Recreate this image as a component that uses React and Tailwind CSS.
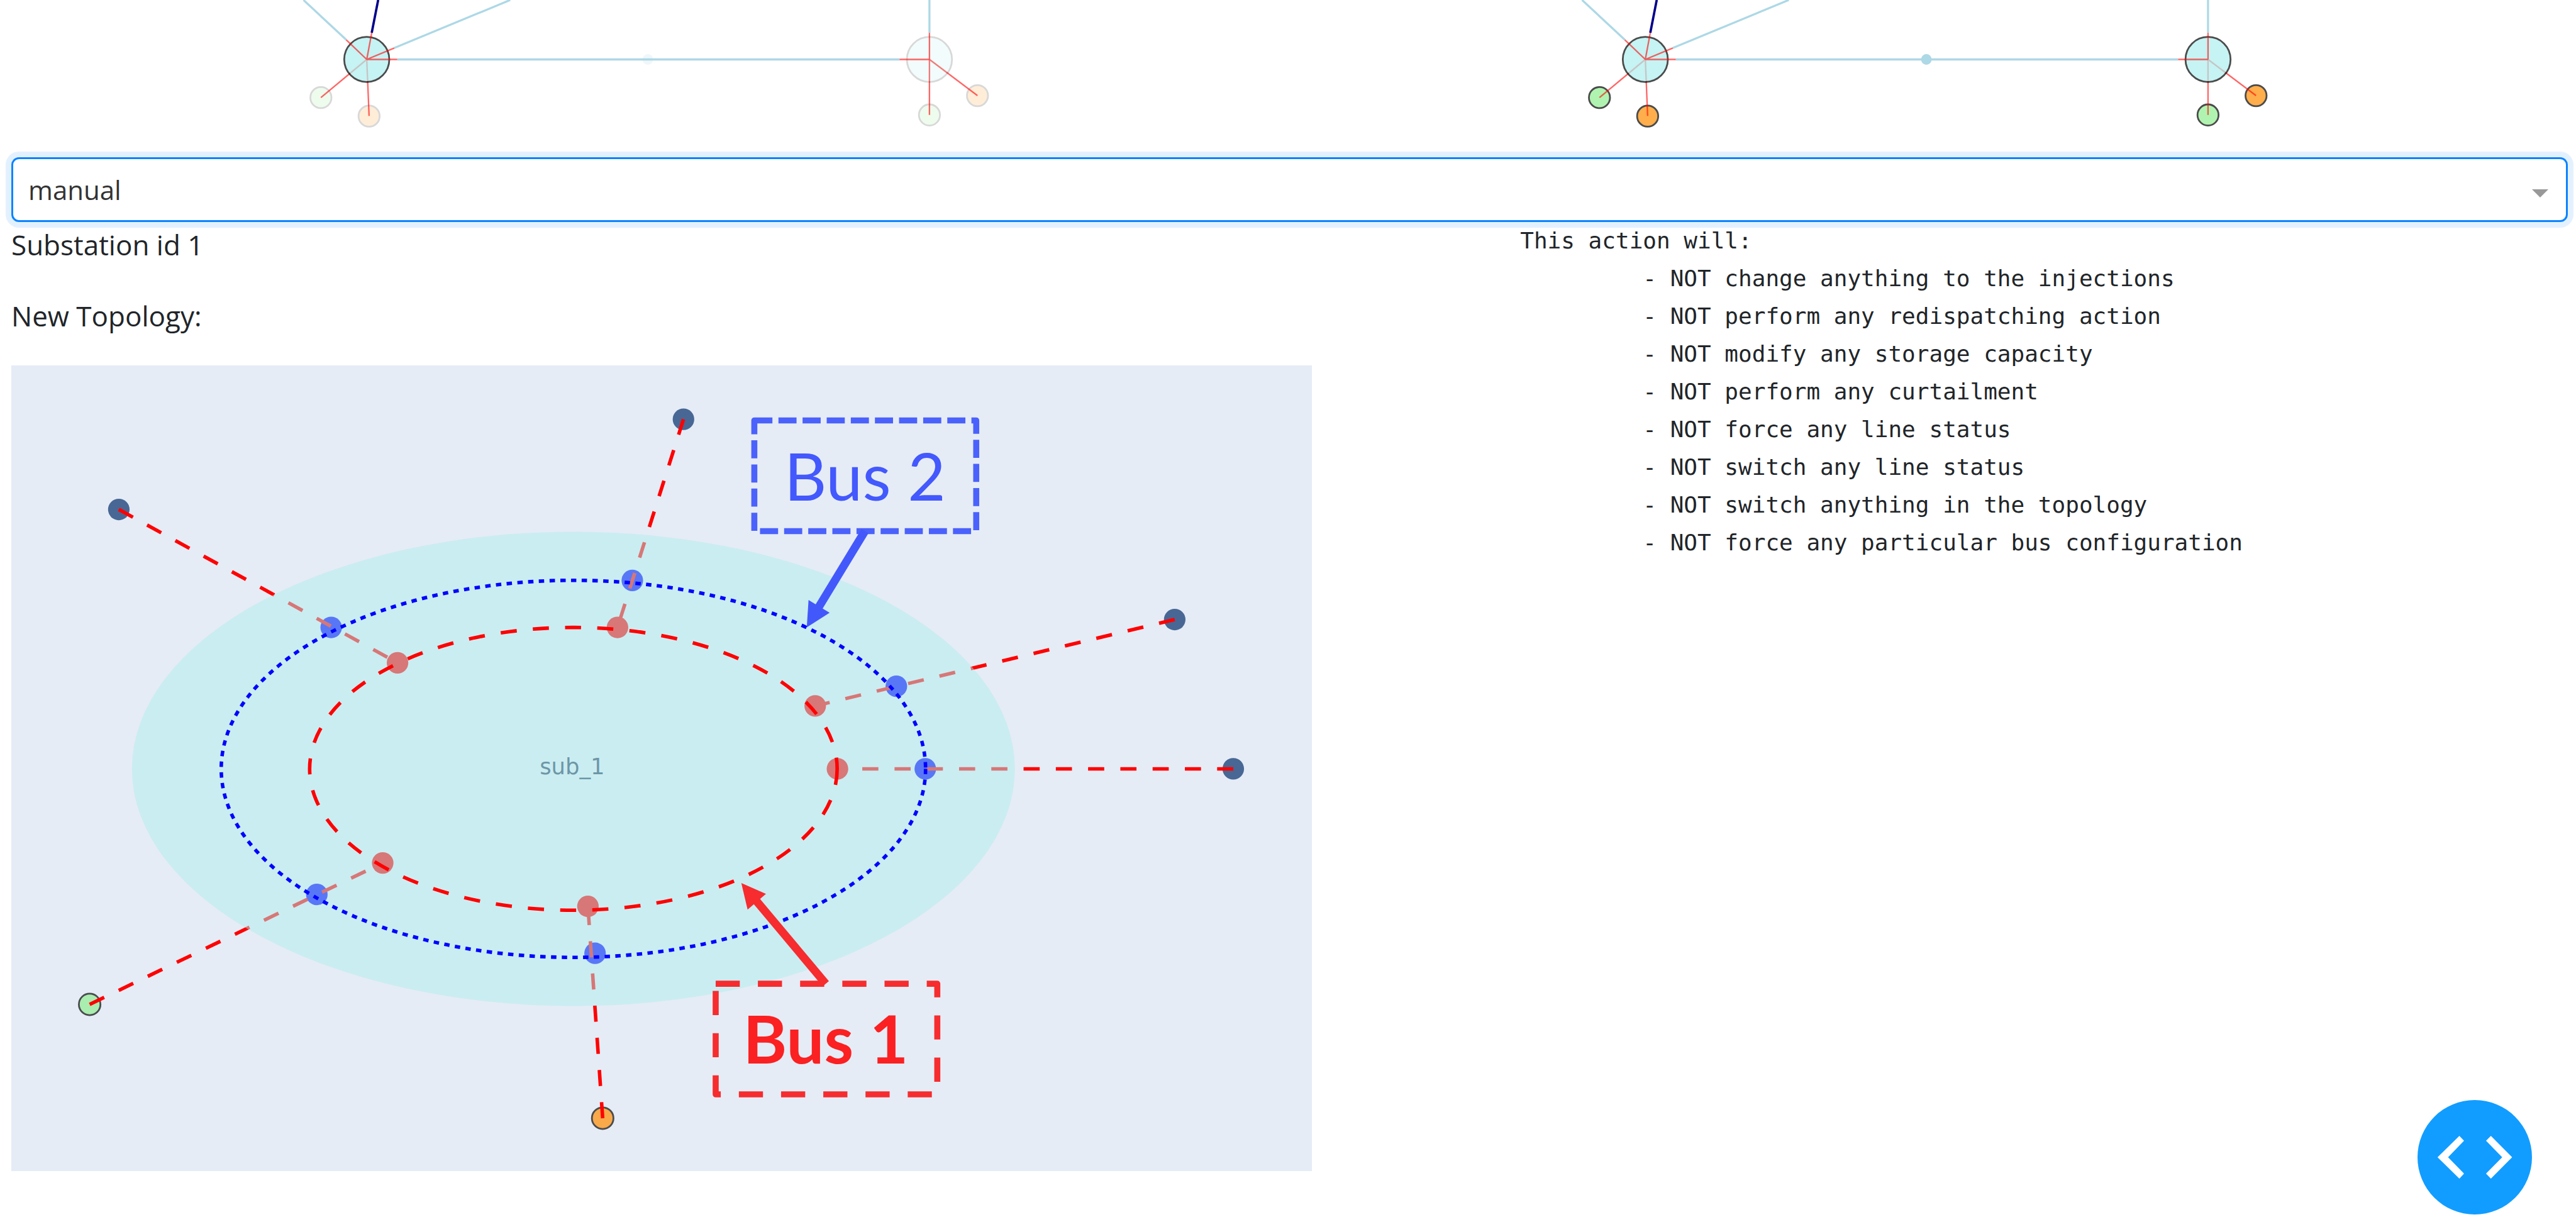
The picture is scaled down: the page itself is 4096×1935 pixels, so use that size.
import React from "react";

const GRID_RED = "rgba(255,0,0,0.6)";

function Load({ x, y, fill, opacity }) {
  return <circle cx={x} cy={y} r="18" fill={fill} stroke="#000" strokeWidth="3" opacity={opacity} />;
}

/* Lower part of the power grid; nodes that did not change are drawn faded. */
function GridGraph({ label, faded }) {
  const soft = faded ? 0.15 : 0.7;
  return (
    <svg viewBox="19 0 2183 269" className="block h-auto w-full" role="img" aria-label={label}>
      <g stroke="#add8e6" strokeWidth="3.500" fill="none">
        <path d="M518 0L591 68M871 0L673 82M678 101.500H1536M1587 0V56" />
      </g>
      <path d="M645.500 0L634.500 56" stroke="#00008b" strokeWidth="4" />
      <circle cx="1106" cy="101.500" r="9" fill="#add8e6" opacity={faded ? 0.2 : 1} />

      <Load x={547.7} y={166.7} fill="#90ee90" opacity={soft} />
      <Load x={630} y={198.3} fill="#ff8c00" opacity={soft} />
      <Load x={1587} y={196.3} fill="#90ee90" opacity={soft} />
      <Load x={1669} y={163.3} fill="#ff8c00" opacity={soft} />
      <g stroke={GRID_RED} strokeWidth="2.500">
        <path d="M626 101.500L547.700 166.700M626 101.500L630 198M1587 101.500V196.300M1587 101.500L1669 163.300" />
      </g>

      <circle cx="626" cy="101.500" r="38.500" fill="#afeeee" stroke="#000" strokeWidth="3" opacity="0.7" />
      <circle cx="1587" cy="101.500" r="38.500" fill="#afeeee" stroke="#000" strokeWidth="3" opacity={soft} />
      <g stroke={GRID_RED} strokeWidth="2.500">
        <path d="M626 101.500L591 68M626 101.500L634.500 56M626 101.500L673 82M626 101.500H678M1587 101.500H1536M1587 101.500V56" />
      </g>
    </svg>
  );
}

const BRANCHES = [
  { outer: [203.6, 870], two: [566.3, 1071.4], one: [679.6, 1131.9], kind: "line" },
  { outer: [1168, 716], two: [1080.6, 991.2], one: [1055.3, 1071.4], kind: "line" },
  { outer: [2007, 1058], two: [1531.6, 1172], one: [1393, 1205.5], kind: "line" },
  { outer: [2107, 1313], two: [1581, 1313], one: [1431, 1313], kind: "line" },
  { outer: [153.8, 1715.3], two: [541.8, 1527.5], one: [654.3, 1473.7], kind: "generator" },
  { outer: [1030, 1909.7], two: [1017, 1628], one: [1004.8, 1547.8], kind: "load" },
];

const OUTER_STYLE = {
  line: { fill: "#486794", stroke: "none" },
  generator: { fill: "#a9edaf", stroke: "#4a4c4e" },
  load: { fill: "#f8a94a", stroke: "#4a4c4e" },
};

function SubstationDiagram() {
  return (
    <svg viewBox="20 624 2221 1376" className="block h-auto w-full bg-[#e5ecf6]" role="img" aria-label="Topology of substation sub_1">
      {BRANCHES.map((b, i) => (
        <g key={i}>
          <circle cx={b.outer[0]} cy={b.outer[1]} r="18.400" strokeWidth="3" {...OUTER_STYLE[b.kind]} />
          <circle cx={b.two[0]} cy={b.two[1]} r="18.400" fill="#0000ff" />
          <line
            x1={b.outer[0]}
            y1={b.outer[1]}
            x2={b.one[0]}
            y2={b.one[1]}
            stroke="#ff0000"
            strokeWidth="6"
            strokeDasharray="27.550 27.550"
          />
          <circle cx={b.one[0]} cy={b.one[1]} r="18.400" fill="#ff0000" />
        </g>
      ))}
      <text x="978" y="1322" textAnchor="middle" fontSize="38" fill="#2a3f5f" className="font-['DejaVu_Sans',sans-serif]">
        sub_1
      </text>
      <ellipse cx="980" cy="1313" rx="754" ry="405" fill="#afeeee" opacity="0.5" />
      <ellipse cx="980" cy="1313" rx="601.500" ry="322" fill="none" stroke="#0000ff" strokeWidth="6" strokeDasharray="9.180 9.180" />
      <ellipse cx="980" cy="1313" rx="450.500" ry="241.500" fill="none" stroke="#ff0000" strokeWidth="6" strokeDasharray="27.550 27.550" />

      <g className="font-[Lato,sans-serif]">
        <path
          d="M1289 718H1668V907H1289Z"
          fill="none"
          stroke="#4b61fb"
          strokeWidth="10.300"
          strokeLinejoin="round"
          strokeDasharray="30.900 10.300"
        />
        <path d="M1478 907L1397 1040" stroke="#4358fb" strokeWidth="14" />
        <path d="M1378.600 1071.500L1381.600 1024.700L1417.600 1046.400Z" fill="#4358fb" />
        <text x="1478" y="855" textAnchor="middle" fontSize="112" fill="#4358fd">
          Bus 2
        </text>

        <path
          d="M1223 1680H1601.500V1869H1223Z"
          fill="none"
          stroke="#f62c2e"
          strokeWidth="10.300"
          strokeLinejoin="round"
          strokeDasharray="41.200 30.900"
        />
        <path d="M1411 1680L1292 1538" stroke="#f62c2e" strokeWidth="14" />
        <path d="M1266.800 1508L1308.900 1526.500L1277.500 1553.400Z" fill="#f62c2e" />
        <text x="1411" y="1816" textAnchor="middle" fontSize="114" fontWeight="700" fill="#fb2021">
          Bus 1
        </text>
      </g>
    </svg>
  );
}

const ACTION_TEXT = `This action will:
\t - NOT change anything to the injections
\t - NOT perform any redispatching action
\t - NOT modify any storage capacity
\t - NOT perform any curtailment
\t - NOT force any line status
\t - NOT switch any line status
\t - NOT switch anything in the topology
\t - NOT force any particular bus configuration`;

function ActionSelect() {
  return (
    <div className="relative">
      <select
        aria-label="Action type"
        defaultValue="manual"
        className="block h-[103px] w-full appearance-none rounded-xl border-3 border-[#0a84ff] bg-white px-6 text-[42px] text-[#333333] shadow-[0_0_0_9px_#e3f1ff] outline-none"
      >
        <option value="manual">manual</option>
      </select>
      <svg viewBox="0 0 28 14" className="pointer-events-none absolute top-[51px] right-[31px] h-[13px] w-[26px]" aria-hidden="true">
        <path d="M0 0H28L14 14Z" fill="#999999" />
      </svg>
    </div>
  );
}

export default function App() {
  return (
    <main className="min-h-screen bg-white pr-[13px] pl-[18px] font-['Open_Sans',sans-serif] text-[44px] leading-[68px] text-[#212529]">
      <section className="grid grid-cols-2">
        <GridGraph label="Grid before the action" faded />
        <GridGraph label="Grid after the action" />
      </section>

      <ActionSelect />

      <section className="grid grid-cols-[7fr_5fr]">
        <div className="flex flex-col gap-[45px] pt-0.5">
          <p>Substation id 1</p>
          <p>New Topology:</p>
          <div className="w-[87.2%]">
            <SubstationDiagram />
          </div>
        </div>
        <pre className="pl-7 font-['DejaVu_Sans_Mono',monospace] text-[36px] leading-[60px] [tab-size:8]">{ACTION_TEXT}</pre>
      </section>

      <button
        type="button"
        aria-label="Open developer tools"
        className="fixed right-[70px] bottom-1 size-[182px] rounded-full bg-[#119dff]"
      >
        <svg viewBox="145 114 588 588" className="block size-full" fill="#ffffff" aria-hidden="true">
          <path d="M248 408L360 298L384 323L302 408L384 492L360 518Z" />
          <path d="M631 408L522 298L497 323L580 408L497 492L522 518Z" />
        </svg>
      </button>
    </main>
  );
}
